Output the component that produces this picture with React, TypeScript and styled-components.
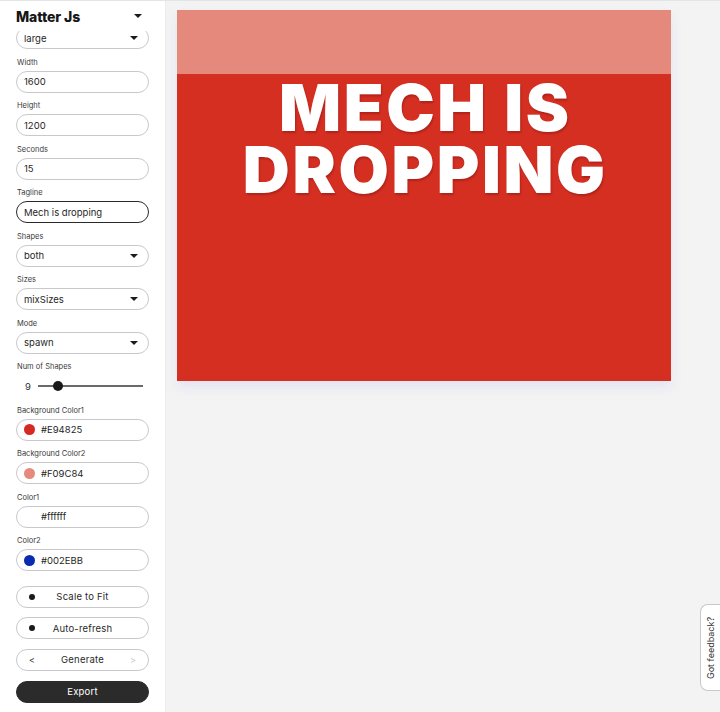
import React, { useLayoutEffect, useRef } from "react";
import styled, { createGlobalStyle } from "styled-components";

const Global = createGlobalStyle`
  html, body { margin: 0; padding: 0; height: 100%; }
  body { font-family: Inter, "Noto Sans", sans-serif; background: #f3f3f4; color: #1d1d1f; overflow: hidden; }
  #root { height: 100%; }
`;

const Page = styled.div`
  display: flex;
  height: 712px;
  width: 720px;
  border-top: 1px solid #e3e4e6;
  box-sizing: border-box;
  position: relative;
`;

const Sidebar = styled.aside`
  width: 166px;
  flex: none;
  background: #ffffff;
  border-right: 1px solid #ececee;
  box-sizing: border-box;
  display: flex;
  flex-direction: column;
  height: 100%;
`;

const Header = styled.div`
  height: 30px;
  flex: none;
  display: flex;
  align-items: center;
  justify-content: space-between;
  padding: 0 23px 0 16px;
  background: #fff;
  z-index: 1;
`;

const Title = styled.h1`
  margin: 0;
  font-size: 14px;
  font-weight: 800;
  letter-spacing: -0.1px;
  color: #161616;
`;

const Caret = styled.span<{ $size?: number }>`
  width: 0;
  height: 0;
  border-left: ${(p) => (p.$size ?? 8) / 2}px solid transparent;
  border-right: ${(p) => (p.$size ?? 8) / 2}px solid transparent;
  border-top: ${(p) => (p.$size ?? 8) / 2}px solid #1b1b1b;
`;

const Scroll = styled.div`
  flex: 1;
  overflow-y: auto;
  scrollbar-width: none;
  &::-webkit-scrollbar { display: none; }
`;

const Content = styled.div`
  display: flex;
  flex-direction: column;
  gap: 8.5px;
  padding: 8px 16px 10px 16px;
`;

const Group = styled.div`
  display: flex;
  flex-direction: column;
  gap: 3px;
`;

const Label = styled.label`
  font-size: 7.5px;
  line-height: 10px;
  height: 10px;
  color: #3a3a3a;
  padding-left: 1px;
`;

const Field = styled.div<{ $focused?: boolean }>`
  height: 22px;
  flex: none;
  box-sizing: border-box;
  border: ${(p) => (p.$focused ? "1.5px solid #2a2a2a" : "1px solid #c9c9cc")};
  border-radius: 11px;
  display: flex;
  align-items: center;
  padding: 0 10px 0 7px;
  gap: 6px;
  font-size: 9.5px;
  color: #1f1f1f;
  background: #fff;
`;

const FieldText = styled.span`
  flex: 1;
`;

const Swatch = styled.span<{ $color: string }>`
  width: 11px;
  height: 11px;
  border-radius: 50%;
  background: ${(p) => p.$color};
  flex: none;
`;

const SliderRow = styled.div`
  display: flex;
  align-items: center;
  gap: 7px;
  height: 22px;
  padding: 0 6px 0 9px;
  font-size: 9.5px;
  color: #333;
`;

const Track = styled.div`
  flex: 1;
  height: 2px;
  background: #6a6a6a;
  position: relative;
`;

const Thumb = styled.span`
  position: absolute;
  top: 50%;
  width: 10px;
  height: 10px;
  border-radius: 50%;
  background: #1a1a1a;
  transform: translate(-50%, -50%);
`;

const ButtonList = styled.div`
  display: flex;
  flex-direction: column;
  gap: 9.7px;
  margin-top: 6px;
`;

const Button = styled.button<{ $dark?: boolean }>`
  height: 22px;
  box-sizing: border-box;
  border-radius: 11px;
  border: 1px solid ${(p) => (p.$dark ? "#2b2b2b" : "#c9c9cc")};
  background: ${(p) => (p.$dark ? "#2b2b2b" : "#fff")};
  color: ${(p) => (p.$dark ? "#fff" : "#2a2a2a")};
  font-family: inherit;
  font-size: 9.5px;
  letter-spacing: 0.2px;
  display: grid;
  grid-template-columns: 18px 1fr 18px;
  align-items: center;
  padding: 0 6px;
`;

const Dot = styled.span`
  width: 6px;
  height: 6px;
  border-radius: 50%;
  background: #1a1a1a;
  justify-self: center;
`;

const Arrow = styled.span<{ $faint?: boolean }>`
  justify-self: center;
  color: ${(p) => (p.$faint ? "#c8c8c8" : "#333")};
  font-size: 9px;
`;

const Main = styled.main`
  flex: 1;
  padding: 9px 0 0 11px;
`;

const Canvas = styled.div`
  width: 494px;
  height: 371px;
  display: flex;
  flex-direction: column;
  background: #d52f22;
  box-shadow: 0 6px 10px rgba(200, 200, 240, 0.35);
`;

const Band = styled.div`
  height: 64px;
  background: #e5897c;
  flex: none;
`;

const Headline = styled.div`
  display: flex;
  flex-direction: column;
  align-items: center;
  padding-top: 3px;
`;

const HeadLine = styled.span`
  color: #fff;
  font-family: Inter, "Noto Sans", sans-serif;
  font-weight: 900;
  font-size: 65px;
  line-height: 62px;
  height: 62px;
  letter-spacing: 2.6px;
  padding-left: 2.6px;
  white-space: nowrap;
  text-shadow: 1px 2px 2px rgba(90, 10, 10, 0.3);
`;

const Feedback = styled.div`
  position: absolute;
  right: 0;
  top: 603px;
  width: 19px;
  height: 85px;
  background: #fff;
  border: 1px solid #c9c9cc;
  border-right: none;
  border-radius: 8px 0 0 8px;
  display: flex;
  align-items: center;
  justify-content: center;
`;

const FeedbackText = styled.span`
  writing-mode: vertical-rl;
  transform: rotate(180deg);
  font-size: 9px;
  color: #333;
  white-space: nowrap;
`;

type Item =
  | { kind: "select"; label: string; value: string }
  | { kind: "input"; label: string; value: string; focused?: boolean }
  | { kind: "color"; label: string; value: string; swatch: string }
  | { kind: "slider"; label: string; value: number; pct: number };

const items: Item[] = [
  { kind: "select", label: "Size", value: "large" },
  { kind: "input", label: "Width", value: "1600" },
  { kind: "input", label: "Height", value: "1200" },
  { kind: "input", label: "Seconds", value: "15" },
  { kind: "input", label: "Tagline", value: "Mech is dropping", focused: true },
  { kind: "select", label: "Shapes", value: "both" },
  { kind: "select", label: "Sizes", value: "mixSizes" },
  { kind: "select", label: "Mode", value: "spawn" },
  { kind: "slider", label: "Num of Shapes", value: 9, pct: 19 },
  { kind: "color", label: "Background Color1", value: "#E94825", swatch: "#d42a23" },
  { kind: "color", label: "Background Color2", value: "#F09C84", swatch: "#e58a7d" },
  { kind: "color", label: "Color1", value: "#ffffff", swatch: "#ffffff" },
  { kind: "color", label: "Color2", value: "#002EBB", swatch: "#0a2ab0" },
];

function Control({ item }: { item: Item }) {
  switch (item.kind) {
    case "select":
      return (
        <Field>
          <FieldText>{item.value}</FieldText>
          <Caret $size={9} />
        </Field>
      );
    case "input":
      return (
        <Field $focused={item.focused}>
          <FieldText>{item.value}</FieldText>
        </Field>
      );
    case "color":
      return (
        <Field>
          <Swatch $color={item.swatch} />
          <FieldText>{item.value}</FieldText>
        </Field>
      );
    case "slider":
      return (
        <SliderRow>
          <span>{item.value}</span>
          <Track>
            <Thumb style={{ left: `${item.pct}%` }} />
          </Track>
        </SliderRow>
      );
  }
}

export default function App() {
  const ref = useRef<HTMLDivElement>(null);
  useLayoutEffect(() => {
    if (ref.current) ref.current.scrollTop = 25;
  }, []);
  return (
    <>
      <Global />
      <Page>
        <Sidebar>
          <Header>
            <Title>Matter Js</Title>
            <Caret $size={8} />
          </Header>
          <Scroll ref={ref}>
            <Content>
              {items.map((it) => (
                <Group key={it.label}>
                  <Label>{it.label}</Label>
                  <Control item={it} />
                </Group>
              ))}
              <ButtonList>
                <Button>
                  <Dot />
                  <span>Scale to Fit</span>
                  <span />
                </Button>
                <Button>
                  <Dot />
                  <span>Auto-refresh</span>
                  <span />
                </Button>
                <Button>
                  <Arrow>&lt;</Arrow>
                  <span>Generate</span>
                  <Arrow $faint>&gt;</Arrow>
                </Button>
                <Button $dark>
                  <span />
                  <span>Export</span>
                  <span />
                </Button>
              </ButtonList>
            </Content>
          </Scroll>
        </Sidebar>
        <Main>
          <Canvas>
            <Band />
            <Headline>
              <HeadLine>MECH IS</HeadLine>
              <HeadLine>DROPPING</HeadLine>
            </Headline>
          </Canvas>
        </Main>
        <Feedback>
          <FeedbackText>Got feedback?</FeedbackText>
        </Feedback>
      </Page>
    </>
  );
}
